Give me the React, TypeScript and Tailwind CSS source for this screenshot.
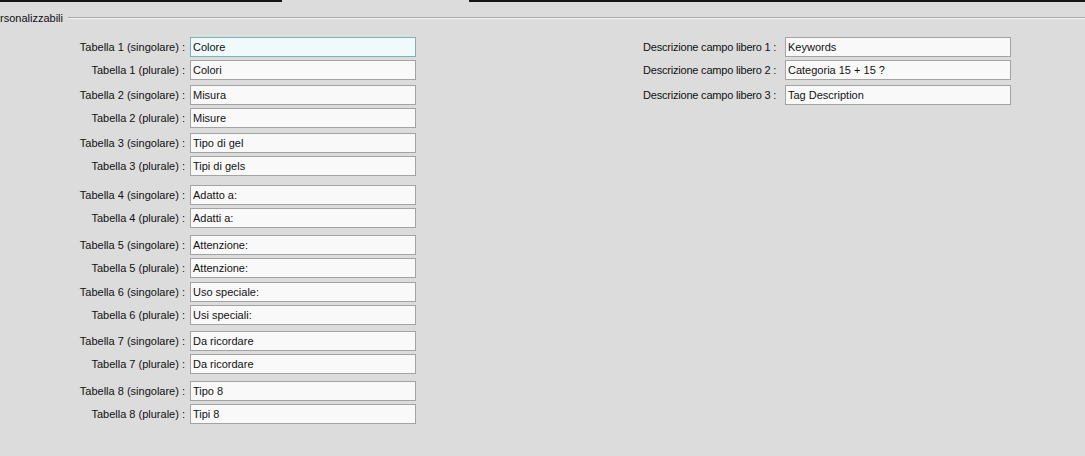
import React from 'react';

// left side: pairs of singular / plural table names
const tables: { sing: string; plur: string; gap: string }[] = [
  { sing: 'Colore', plur: 'Colori', gap: 'mt-0' },
  { sing: 'Misura', plur: 'Misure', gap: 'mt-[5px]' },
  { sing: 'Tipo di gel', plur: 'Tipi di gels', gap: 'mt-[5px]' },
  { sing: 'Adatto a:', plur: 'Adatti a:', gap: 'mt-[9px]' },
  { sing: 'Attenzione:', plur: 'Attenzione:', gap: 'mt-[7px]' },
  { sing: 'Uso speciale:', plur: 'Usi speciali:', gap: 'mt-[4px]' },
  { sing: 'Da ricordare', plur: 'Da ricordare', gap: 'mt-[6px]' },
  { sing: 'Tipo 8', plur: 'Tipi 8', gap: 'mt-[7px]' },
];

const freeFields = ['Keywords', 'Categoria 15 + 15 ?', 'Tag Description'];

const Field: React.FC<{ value: string; focused?: boolean }> = ({ value, focused }) => (
  <div
    className={`w-[226px] h-[20px] border flex items-center pl-[2px] whitespace-nowrap ${
      focused ? 'border-[#7fb3b3] bg-[#effbfb]' : 'border-[#a3a3a3] bg-[#f9f9f9]'
    }`}
  >
    {value}
  </div>
);

const App: React.FC = () => {
  return (
    <div className="w-[1085px] h-[456px] bg-[#dcdcdc] overflow-hidden text-[11px] text-[#111] font-['Tahoma','Liberation_Sans',sans-serif]">
      {/* tab strip edge */}
      <div className="flex h-[2px]">
        <div className="w-[282px] bg-[#151515]"></div>
        <div className="w-[187px]"></div>
        <div className="flex-1 bg-[#151515]"></div>
      </div>

      {/* group box caption (scrolled, only the tail is visible) */}
      <div className="mt-[10px] h-[12px] flex items-center overflow-hidden">
        <span className="leading-[12px] whitespace-nowrap">rsonalizzabili</span>
        <div className="flex-1 ml-[5px] h-[2px] border-t border-[#a8a8a8] border-b border-b-[#f4f4f4]"></div>
      </div>

      <div className="mt-[13px] flex">
        {/* tables */}
        <div className="flex flex-col">
          {tables.map((t, i) => (
            <div key={i} className={`flex flex-col gap-[3px] ${t.gap}`}>
              <div className="flex items-center">
                <div className="w-[186px] pr-[1px] text-right whitespace-nowrap">Tabella {i + 1} (singolare) :</div>
                <div className="ml-[4px]">
                  <Field value={t.sing} focused={i === 0} />
                </div>
              </div>
              <div className="flex items-center">
                <div className="w-[186px] pr-[1px] text-right whitespace-nowrap">Tabella {i + 1} (plurale) :</div>
                <div className="ml-[4px]">
                  <Field value={t.plur} />
                </div>
              </div>
            </div>
          ))}
        </div>

        {/* free field descriptions */}
        <div className="ml-[227px] flex flex-col">
          {freeFields.map((f, i) => (
            <div key={i} className={`flex items-center ${i === 1 ? 'mt-[3px]' : i === 2 ? 'mt-[5px]' : ''}`}>
              <div className="w-[142px] whitespace-nowrap tracking-[-0.2px]">Descrizione campo libero {i + 1} :</div>
              <Field value={f} />
            </div>
          ))}
        </div>
      </div>
    </div>
  );
};

export default App;
